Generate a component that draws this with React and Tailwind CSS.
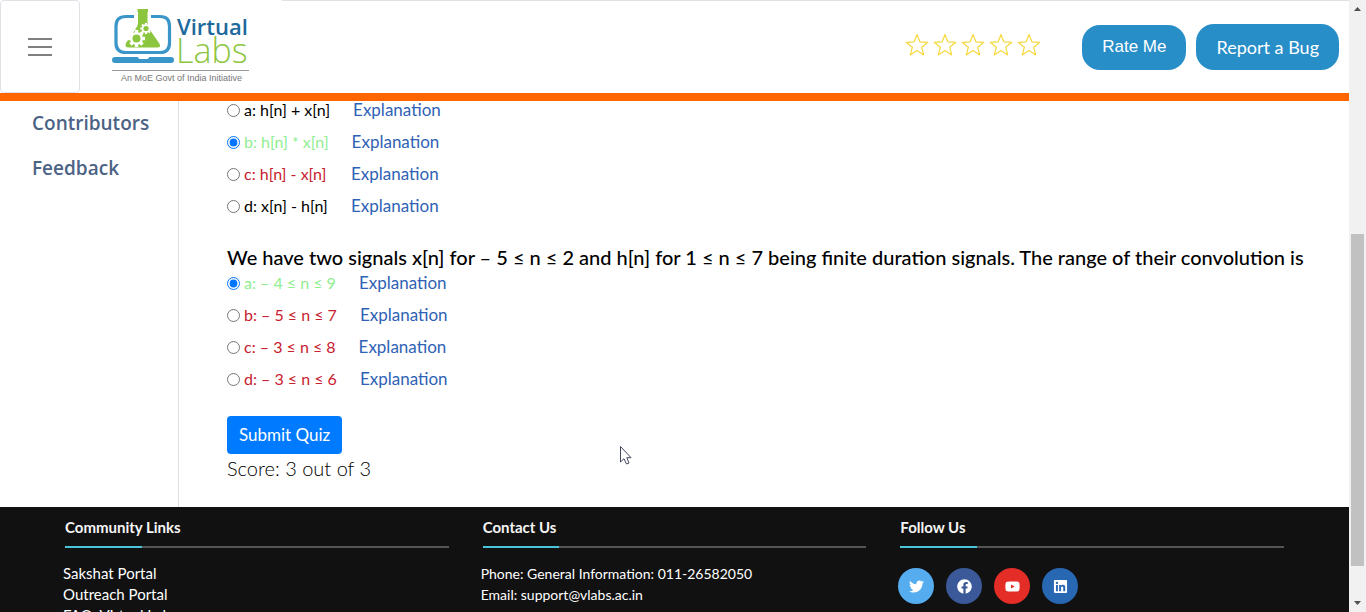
import React from "react";
import { FaTwitter, FaFacebook, FaYoutube, FaLinkedin } from "react-icons/fa";

const questions = [
  {
    id: "q1",
    title: null,
    options: [
      { key: "a", text: "h[n] + x[n]", color: "text-black" },
      { key: "b", text: "h[n] * x[n]", color: "text-[#90ee90]", checked: true },
      { key: "c", text: "h[n] - x[n]", color: "text-[#c8202e]" },
      { key: "d", text: "x[n] - h[n]", color: "text-black" },
    ],
  },
  {
    id: "q2",
    title:
      "We have two signals x[n] for – 5 ≤ n ≤ 2 and h[n] for 1 ≤ n ≤ 7 being finite duration signals. The range of their convolution is",
    options: [
      { key: "a", text: "– 4 ≤ n ≤ 9", color: "text-[#90ee90]", checked: true },
      { key: "b", text: "– 5 ≤ n ≤ 7", color: "text-[#c8202e]" },
      { key: "c", text: "– 3 ≤ n ≤ 8", color: "text-[#c8202e]" },
      { key: "d", text: "– 3 ≤ n ≤ 6", color: "text-[#c8202e]" },
    ],
  },
];

const socials = [
  { name: "Twitter", Icon: FaTwitter, bg: "bg-[#55acee]" },
  { name: "Facebook", Icon: FaFacebook, bg: "bg-[#3b5998]" },
  { name: "YouTube", Icon: FaYoutube, bg: "bg-[#e52d27]" },
  { name: "LinkedIn", Icon: FaLinkedin, bg: "bg-[#2867b2]" },
];

function Gear({ x, y, r, hole }) {
  return (
    <g transform={`translate(${x} ${y})`}>
      {[0, 45, 90, 135].map((a) => (
        <rect key={a} x={-r * 0.2} y={-r} width={r * 0.4} height={r * 2} fill="#fff" transform={`rotate(${a})`} />
      ))}
      <circle r={r * 0.76} fill="#fff" />
      <circle r={hole} fill="#8cc63f" />
    </g>
  );
}

function Logo() {
  return (
    <svg width="140" height="78" viewBox="0 0 140 78" role="img" aria-label="Virtual Labs">
      <path
        d="M22 8.500H14Q4 8.500 4 18V35Q4 44.500 14 44.500H48Q57.500 44.500 57.500 35V18Q57.500 8.500 48 8.500H39"
        fill="none"
        stroke="#3a96c8"
        strokeWidth="3.200"
      />
      <path d="M3 49H26Q26 51 29 51H34Q37 51 37 49H59Q62 49 62 51.500V52Q62 55 59 55H3Q0 55 0 52Q0 49 3 49Z" fill="#3a96c8" />
      <path
        d="M25.500 1H36V4H35.500V15Q36 19 38 22L47 35Q50 39.500 45 39.500H17Q12 39.500 14 35L23 22Q26 18 26 15V4H25.500Z"
        fill="#8cc63f"
      />
      <Gear x={24.5} y={30.500} r={8.5} hole={4} />
      <Gear x={34} y={20.500} r={5.600} hole={2.600} />
      <text x="65" y="27" fontFamily="Open Sans, sans-serif" fontWeight="600" fontSize="22" fill="#20699c">
        Virtual
      </text>
      <text x="64" y="55" fontFamily="Open Sans, sans-serif" fontWeight="300" fontSize="34" fill="#8cc63f">
        Labs
      </text>
      <path d="M0 62.500H137" stroke="#999" />
      <text x="9" y="73" fontFamily="Liberation Sans, Arial, sans-serif" fontSize="9" fill="#777">
        An MoE Govt of India Initiative
      </text>
    </svg>
  );
}

function Header() {
  return (
    <header className="flex h-[101px] shrink-0 border-b-8 border-[#ff6600] bg-white">
      <button
        type="button"
        aria-label="Toggle menu"
        className="flex w-20 shrink-0 flex-col items-center justify-center gap-[6px] rounded border border-[#dee2e6]"
      >
        <span className="h-[2px] w-6 bg-[#808080]" />
        <span className="h-[2px] w-6 bg-[#808080]" />
        <span className="h-[2px] w-6 bg-[#808080]" />
      </button>
      <a href="#home" className="w-[202px] shrink-0 pt-2 pl-8">
        <Logo />
      </a>
      <div className="flex flex-1 items-center justify-end border-t border-[#dee2e6] pr-[10px]">
        <div className="mr-[41px] flex gap-1 pb-1" role="group" aria-label="Rating">
          {[1, 2, 3, 4, 5].map((n) => (
            <button key={n} type="button" aria-label={`${n} stars`} className="block">
              <svg width="24" height="24" viewBox="0 0 24 24" fill="none" stroke="#f5d93f" strokeWidth="1.2" strokeLinejoin="round">
                <path d="M12 1.500 14.800 8.800 22.800 9.300 16.600 14.200 18.700 21.900 12 17.600 5.300 21.900 7.400 14.200 1.200 9.300 9.200 8.800Z" />
              </svg>
            </button>
          ))}
        </div>
        <button
          type="button"
          className="mr-[10px] h-[45px] rounded-[18px] bg-[#288ec8] px-5 font-['Liberation_Sans',Arial,sans-serif] text-[17px] text-white"
        >
          Rate Me
        </button>
        <button type="button" className="h-[46px] rounded-[18px] bg-[#288ec8] px-5 text-[18px] text-white">
          Report a Bug
        </button>
      </div>
    </header>
  );
}

function Question({ question }) {
  return (
    <section>
      {question.title && (
        <h2 id={`${question.id}-title`} className="mt-[30px] mb-[5px] text-[20px] leading-6 font-medium text-black">
          {question.title}
        </h2>
      )}
      <div className="flex flex-col gap-[14px]" role="radiogroup" aria-labelledby={question.title ? `${question.id}-title` : undefined}>
        {question.options.map((o) => (
          <div key={o.key} className="flex items-center text-[17px] leading-[18px]">
            <input
              type="radio"
              id={`${question.id}-${o.key}`}
              name={question.id}
              defaultChecked={o.checked}
              className="mr-1 size-[13px]"
            />
            <label htmlFor={`${question.id}-${o.key}`} className={`${o.color} min-w-[84px] text-[16px]`}>
              {o.key}: {o.text}
            </label>
            <a href={`#${question.id}-${o.key}`} className="ml-[23px] text-[#2f62b5]">
              Explanation
            </a>
          </div>
        ))}
      </div>
    </section>
  );
}

function FooterColumn({ title, children }) {
  return (
    <section>
      <div className="ml-[2px] border-b-2 border-[#555]">
        <h2 className="pt-[10px] pb-[9px] text-[15px] leading-5 font-bold text-[#f5f5f5]">{title}</h2>
        <div className="-mb-[2px] h-[2px] w-1/5 bg-[#4ac4d8]" />
      </div>
      {children}
    </section>
  );
}

function Footer() {
  return (
    <footer className="grid grow shrink-0 grid-cols-3 gap-x-8 bg-[#111] pr-[65px] pl-[63px] text-[14px] leading-[21px] text-white">
      <FooterColumn title="Community Links">
        <ul className="pt-[15px] text-[15px] leading-[21px]">
          <li><a href="#sakshat">Sakshat Portal</a></li>
          <li><a href="#outreach">Outreach Portal</a></li>
          <li><a href="#faq">FAQ: Virtual Labs</a></li>
        </ul>
      </FooterColumn>
      <FooterColumn title="Contact Us">
        <p className="pt-[15px]">Phone: General Information: 011-26582050</p>
        <p>Email: support@vlabs.ac.in</p>
      </FooterColumn>
      <FooterColumn title="Follow Us">
        <div className="flex gap-3 pt-5">
          {socials.map(({ name, Icon, bg }) => (
            <a key={name} href={`#${name}`} aria-label={name} className={`flex size-9 items-center justify-center rounded-full ${bg}`}>
              <Icon className="size-[15px]" />
            </a>
          ))}
        </div>
      </FooterColumn>
    </footer>
  );
}

function ScrollBar() {
  return (
    <div aria-hidden="true" className="flex w-[17px] shrink-0 flex-col items-center bg-[#f1f1f1]">
      <svg width="17" height="17" viewBox="0 0 17 17"><path d="M5 11 8.500 7 12 11Z" fill="#505050" /></svg>
      <div className="grow-[217]" />
      <div className="w-[13px] grow-[332] bg-[#c1c1c1]" />
      <div className="grow-[29]" />
      <svg width="17" height="17" viewBox="0 0 17 17"><path d="M5 6 8.500 10 12 6Z" fill="#505050" /></svg>
    </div>
  );
}

export default function App() {
  return (
    <div className="relative flex h-screen overflow-hidden bg-white font-[Lato,sans-serif]">
      <div className="flex min-w-0 flex-1 flex-col overflow-hidden">
        <Header />
        <div className="flex shrink-0">
          <nav className="flex w-[179px] shrink-0 flex-col gap-[17px] border-r border-[#dee2e6] pt-2 pl-8 font-['Open_Sans',sans-serif] text-[19px] leading-7 font-semibold text-[#4b6385]">
            <a href="#contributors">Contributors</a>
            <a href="#feedback">Feedback</a>
          </nav>
          <main className="flex-1 pb-[25px] pl-12">
            {questions.map((q) => (
              <Question key={q.id} question={q} />
            ))}
            <button type="button" className="mt-7 block h-[38px] rounded bg-[#007bff] px-3 text-[17px] text-white">
              Submit Quiz
            </button>
            <p className="text-[20px] leading-7 font-light text-black">Score: 3 out of 3</p>
          </main>
        </div>
        <Footer />
      </div>
      <ScrollBar />
      <svg className="pointer-events-none absolute top-[445px] left-[619px]" width="14" height="21" viewBox="0 0 14 21" aria-hidden="true">
        <path d="M1.500 1.500V17L5 13.700 7.500 19 10 18 7.800 12.700H12Z" fill="#fff" stroke="#44485f" />
      </svg>
    </div>
  );
}
